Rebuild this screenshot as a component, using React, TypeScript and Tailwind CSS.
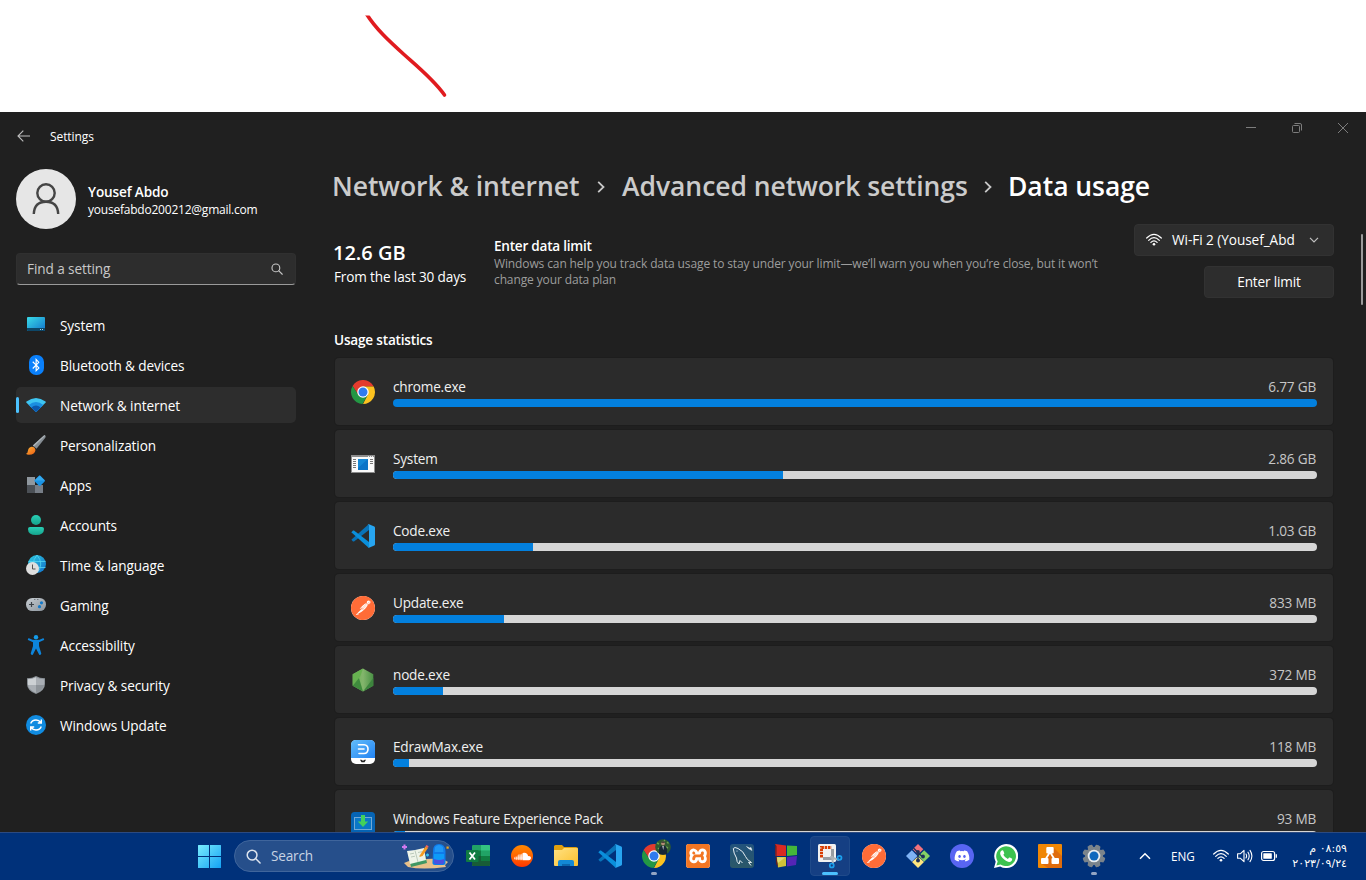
import type { ReactNode } from "react";
import { FaDiscord, FaSoundcloud, FaBluetoothB } from "react-icons/fa";
import { SiPostman, SiXampp } from "react-icons/si";

/* ---------- shared app icons (24x24) ---------- */

function ChromeIcon({ size = 24 }: { size?: number }) {
  return (
    <svg width={size} height={size} viewBox="0 0 48 48">
      <path d="M24 13 H45.3 L44.8 12 A24 24 0 0 0 3.2 12 L14.5 29.5 Z" fill="#e33b2e" />
      <path d="M45.3 13 H24 L33.5 29.5 L24 48 A24 24 0 0 0 45.3 13 Z" fill="#fcc21f" />
      <path d="M3.2 12 L14.5 29.5 L33.5 29.5 L23 48 A24 24 0 0 1 3.2 12 Z" fill="#239744" />
      <circle cx="24" cy="24" r="11.5" fill="#fff" />
      <circle cx="24" cy="24" r="9" fill="#2f7bee" />
    </svg>
  );
}

function CodeIcon() {
  return (
    <svg width="24" height="24" viewBox="0 0 24 24">
      <path d="M0.6 16 L2 17.4 Q2.5 17.7 3 17.4 L18 6 V0.6 Q17.4 0.5 16.8 1 L0.6 15.4 Q0.3 15.7 0.6 16Z" fill="#0873b8" />
      <path d="M0.6 8 L2 6.6 Q2.5 6.3 3 6.6 L18 18 V23.4 Q17.4 23.5 16.8 23 L0.6 8.6 Q0.3 8.3 0.6 8Z" fill="#0a8fdb" />
      <path d="M17 0.2 Q17.6 0 18 0.2 L23.3 2.6 Q24 3 24 3.7 V20.3 Q24 21 23.3 21.4 L18 23.8 Q17.2 24 16.6 23.4 Q18 23.6 18 22.5 V1.5 Q18 .4 16.6 .6Z" fill="#27a5f0" />
    </svg>
  );
}

function PostmanIcon() {
  return (
    <span className="flex size-6 items-center justify-center rounded-full bg-white">
      <SiPostman size={24} color="#ff6c37" />
    </span>
  );
}

function SystemProcessIcon() {
  return (
    <svg width="24" height="24" viewBox="0 0 24 24">
      <rect x="0" y="3" width="24" height="18" fill="#8c8c8c" />
      <rect x="1" y="5" width="22" height="15" fill="#fafafa" />
      <path d="M17 4.5h1M19 4.5h1M21 4.5h1" stroke="#e8e8e8" />
      <path d="M2 7.5h3M2 9.5h3M2 11.5h3M2 13.5h3M2 15.5h3M19 7.5h3M19 9.5h3M19 11.5h3" stroke="#777" />
      <rect x="7" y="7" width="10" height="11" fill="#0b74c8" />
      <path d="M7 7h10L7 16z" fill="#1487d6" />
    </svg>
  );
}

function NodeIcon() {
  return (
    <svg width="24" height="24" viewBox="0 0 24 24">
      <defs>
        <linearGradient id="nodeface" x1="0" y1="0" x2="1" y2="0">
          <stop offset="0" stopColor="#6fb257" />
          <stop offset=".5" stopColor="#83b56c" />
          <stop offset="1" stopColor="#4a9145" />
        </linearGradient>
      </defs>
      <path d="M12 .5 L22.3 6.300 V17.700 L12 23.500 L1.700 17.700 V6.300Z" fill="url(#nodeface)" />
      <path d="M1.700 6.300 L12 .5 L9 9 L1.700 17.700Z" fill="#67b150" />
      <path d="M1.700 17.700 L8 10 L12 23.500Z" fill="#3f8c3d" />
      <path d="M22.300 10 V17.700 L12 23.500Z" fill="#3d843d" />
    </svg>
  );
}

function EdrawIcon() {
  return (
    <svg width="24" height="24" viewBox="0 0 24 24">
      <defs>
        <linearGradient id="edraw" x1="0" y1="0" x2="1" y2="1">
          <stop offset="0" stopColor="#62bdfb" />
          <stop offset="1" stopColor="#2383f2" />
        </linearGradient>
      </defs>
      <rect width="24" height="24" rx="5" fill="#fff" />
      <path d="M0 18 V5 Q0 0 5 0 H19 Q24 0 24 5 V18Z" fill="url(#edraw)" />
      <path d="M7.5 4.700 H13 Q17 5 17 9 Q17 13.300 13 13.500 H8 M7.500 9 H13" fill="none" stroke="#fff" strokeWidth="1.600" strokeLinecap="round" />
      <path d="M9 19.800 h1.500 l.8 .7 h1.400 l.8-.7 H15 L13.500 22.200 h-3Z" fill="#222" />
    </svg>
  );
}

function FeaturePackIcon() {
  return (
    <svg width="24" height="24" viewBox="0 0 24 24">
      <rect width="24" height="24" rx="3.5" fill="#0664b4" />
      <rect x="3.5" y="5.5" width="17" height="12" fill="#0a77c7" stroke="#72a9d6" />
      <path d="M10 3h4v6.500h3.200L12 15 6.800 9.500H10Z" fill="#43d05c" />
    </svg>
  );
}

/* ---------- sidebar icons (20x20) ---------- */

const navItems: { label: string; icon: ReactNode }[] = [
  {
    label: "System",
    icon: (
      <svg width="20" height="20" viewBox="0 0 20 20">
        <defs>
          <linearGradient id="sys" x1="0" y1="0" x2="1" y2="1">
            <stop offset="0" stopColor="#39dbe8" />
            <stop offset="1" stopColor="#1274cb" />
          </linearGradient>
        </defs>
        <rect x="1" y="2" width="18" height="14" rx="1" fill="url(#sys)" />
        <path d="M1 13h18v2q0 1-1 1H2q-1 0-1-1z" fill="#0d4768" />
        <path d="M14 14.500h1M16 14.500h1" stroke="#a8d6ea" />
      </svg>
    ),
  },
  {
    label: "Bluetooth & devices",
    icon: (
      <span className="flex h-5 w-[15px] items-center justify-center rounded-[7px] bg-[#0a80fb]">
        <FaBluetoothB size={14} color="#fff" />
      </span>
    ),
  },
  {
    label: "Network & internet",
    icon: (
      <svg width="20" height="20" viewBox="0 0 20 20">
        <path d="M.3 7.500 Q0 7 .5 6.500 Q10 -.5 19.500 6.500 Q20 7 19.700 7.500 L10.700 16.500 Q10 17 9.300 16.500Z" fill="#3ec5f1" />
        <path d="M2.700 10 Q10 4 17.300 10 L10.700 16.500 Q10 17 9.300 16.500Z" fill="#1a8ee0" />
        <path d="M5.400 12.600 Q10 8.600 14.600 12.600 L10.700 16.500 Q10 17 9.300 16.500Z" fill="#0b58ae" />
      </svg>
    ),
  },
  {
    label: "Personalization",
    icon: (
      <svg width="20" height="20" viewBox="0 0 20 20">
        <defs>
          <linearGradient id="brush" x1="0" y1="0" x2="1" y2="1">
            <stop offset="0" stopColor="#fcb438" />
            <stop offset="1" stopColor="#ee5d12" />
          </linearGradient>
        </defs>
        <path d="M18.200 .3 Q20.400 .4 19.300 2.800 L10.500 13.800 L6.800 10.500 Z" fill="#858d93" />
        <path d="M18.200 .3 Q19 .2 19.200 .8 L8 11.500 L6.800 10.500Z" fill="#adb4b9" />
        <path d="M5.500 11.800 Q8.500 11.500 9.500 15 Q9 19.500 3 19.800 Q1 19.900 0 18.800 Q1.800 18.200 2 15.500 Q2.500 12.300 5.500 11.800Z" fill="url(#brush)" />
      </svg>
    ),
  },
  {
    label: "Apps",
    icon: (
      <svg width="20" height="20" viewBox="0 0 20 20">
        <rect x="1" y="2" width="8" height="8" fill="#8f979e" />
        <rect x="1" y="10" width="8" height="8" fill="#4b5056" />
        <rect x="9" y="10" width="8" height="8" fill="#777e87" />
        <rect x="9.700" y="1.800" width="8" height="8" rx="1" transform="rotate(45 13.700 5.800)" fill="#1a93e4" />
        <path d="M13.700 .6 L18.600 5.500 H8.600Z" fill="#34a9ee" />
      </svg>
    ),
  },
  {
    label: "Accounts",
    icon: (
      <svg width="20" height="20" viewBox="0 0 20 20">
        <defs>
          <linearGradient id="acct" x1="0" y1="0" x2="0" y2="1">
            <stop offset="0" stopColor="#29cfb5" />
            <stop offset="1" stopColor="#15a38c" />
          </linearGradient>
        </defs>
        <circle cx="10" cy="5" r="5" fill="url(#acct)" />
        <path d="M4 12 H16 Q18 12 18 14 Q18 20 10 20 Q2 20 2 14 Q2 12 4 12Z" fill="url(#acct)" />
      </svg>
    ),
  },
  {
    label: "Time & language",
    icon: (
      <svg width="20" height="20" viewBox="0 0 20 20">
        <defs>
          <linearGradient id="globe" x1="0" y1="0" x2="1" y2="1">
            <stop offset="0" stopColor="#2fcbe0" />
            <stop offset="1" stopColor="#1170cc" />
          </linearGradient>
        </defs>
        <circle cx="11" cy="9" r="9" fill="url(#globe)" />
        <path d="M2.500 6.500h17M5 12.500h14.500M11 0Q3.500 9 11 18M11 0Q18.500 9 11 18" stroke="#54d5f3" strokeWidth=".8" fill="none" />
        <circle cx="6.500" cy="13.500" r="6.500" fill="#dedede" />
        <path d="M6.500 9.500v4.500h3" stroke="#525252" fill="none" />
      </svg>
    ),
  },
  {
    label: "Gaming",
    icon: (
      <svg width="20" height="20" viewBox="0 0 20 20">
        <defs>
          <linearGradient id="pad" x1="0" y1="0" x2="1" y2="1">
            <stop offset="0" stopColor="#c7cdd2" />
            <stop offset="1" stopColor="#8b949c" />
          </linearGradient>
        </defs>
        <rect x="0" y="3" width="20" height="13" rx="6.300" fill="url(#pad)" />
        <path d="M3 9.500h5M5.500 7v5" stroke="#3c4248" strokeWidth="1.200" />
        <path d="M8.300 4.500h1M11.300 4.500h1" stroke="#555c63" />
        <circle cx="15.500" cy="7.800" r="1.600" fill="#1279ca" />
        <circle cx="13.500" cy="11.700" r="1.600" fill="#1279ca" />
      </svg>
    ),
  },
  {
    label: "Accessibility",
    icon: (
      <svg width="20" height="20" viewBox="0 0 20 20">
        <circle cx="10" cy="2.200" r="2.200" fill="#149ceb" />
        <path d="M3 3.200 Q10 7 17 3.200 Q18.600 3.300 18 4.900 L13 7.300 V11 L15.300 18.500 Q15 20.300 13.200 19.800 L10 13.500 L6.800 19.800 Q5 20.300 4.700 18.500 L7 11 V7.300 L2 4.900 Q1.400 3.300 3 3.200Z" fill="#0d85dc" />
      </svg>
    ),
  },
  {
    label: "Privacy & security",
    icon: (
      <svg width="20" height="20" viewBox="0 0 20 20">
        <path d="M10 1 Q13.500 3.300 19 3.300 V9 Q19 15.500 10 19 Q1 15.500 1 9 V3.300 Q6.500 3.300 10 1Z" fill="#8b9197" />
        <path d="M10 2.200 Q13.500 4.200 18 4.300 V9 Q18 14.800 10 17.900 Q2 14.800 2 9 V4.300 Q6.500 4.200 10 2.200Z" fill="#a9aeb4" />
        <path d="M10 2.200 V10 H2 V4.300 Q6.500 4.200 10 2.200Z" fill="#ccd0d4" />
        <path d="M10 10 H18 Q17.500 14.800 10 17.900Z" fill="#8d9399" />
      </svg>
    ),
  },
  {
    label: "Windows Update",
    icon: (
      <svg width="20" height="20" viewBox="0 0 20 20">
        <circle cx="10" cy="10" r="10" fill="#108be0" />
        <path d="M4.700 8.500 Q6 5 10 5 Q13 5 14.800 7.500 M15.300 4.500 V8 H11.800 M15.300 11.500 Q14 15 10 15 Q7 15 5.200 12.500 M4.700 15.500 V12 H8.200" stroke="#fff" strokeWidth="1.400" fill="none" />
      </svg>
    ),
  },
];

const usage: { name: string; amount: string; fill: number; icon: ReactNode }[] = [
  { name: "chrome.exe", amount: "6.77 GB", fill: 924, icon: <ChromeIcon /> },
  { name: "System", amount: "2.86 GB", fill: 390, icon: <SystemProcessIcon /> },
  { name: "Code.exe", amount: "1.03 GB", fill: 140, icon: <CodeIcon /> },
  { name: "Update.exe", amount: "833 MB", fill: 111, icon: <PostmanIcon /> },
  { name: "node.exe", amount: "372 MB", fill: 50, icon: <NodeIcon /> },
  { name: "EdrawMax.exe", amount: "118 MB", fill: 16, icon: <EdrawIcon /> },
  { name: "Windows Feature Experience Pack", amount: "93 MB", fill: 12, icon: <FeaturePackIcon /> },
];

function WifiIcon() {
  return (
    <svg width="16" height="16" viewBox="0 0 16 16" fill="none" stroke="currentColor" strokeWidth="1.2" strokeLinecap="round">
      <path d="M.7 6 Q8 -1.200 15.300 6M2.700 8.300 Q8 3 13.300 8.300M4.900 10.400 Q8 7.300 11.100 10.400" />
      <circle cx="8" cy="12.300" r="1.300" fill="currentColor" stroke="none" />
    </svg>
  );
}

function SearchIcon({ size, stroke }: { size: number; stroke: number }) {
  return (
    <svg width={size} height={size} viewBox="0 0 16 16" fill="none" stroke="currentColor" strokeWidth={stroke} strokeLinecap="round">
      <circle cx="6.500" cy="6.500" r="5.200" />
      <path d="M10.500 10.500 L15 15" />
    </svg>
  );
}

function Sidebar() {
  return (
    <aside className="flex w-[334px] shrink-0 flex-col pl-4">
      <div className="flex h-[49px] items-center pl-px">
        <svg className="mb-0.5" width="14" height="12" viewBox="0 0 14 12" fill="none" stroke="#bdbdbd" strokeWidth="1.1">
          <path d="M13 6H1M6.300 .7 L1 6 L6.300 11.300" />
        </svg>
        <span className="ml-[19px] text-[12px] tracking-[-0.08px]">Settings</span>
      </div>
      <div className="mt-2 flex h-[60px] items-center">
        <div className="flex size-[60px] items-center justify-center rounded-full bg-[#e6e6e6]">
          <svg width="28" height="32" viewBox="0 0 28 32" fill="none" stroke="#454545" strokeWidth="2.4">
            <circle cx="14" cy="10" r="8.700" />
            <path d="M1.800 31 Q2.300 18.800 14 18.800 Q25.700 18.800 26.200 31" />
          </svg>
        </div>
        <div className="ml-3 flex flex-col pt-[3px]">
          <span className="text-[13.6px] leading-[18px] font-semibold tracking-[-0.15px]">Yousef Abdo</span>
          <span className="text-[12px] leading-[18px] tracking-[-0.22px]">yousefabdo200212@gmail.com</span>
        </div>
      </div>
      <div className="mt-6 flex h-8 w-[280px] items-center justify-between rounded-[4px] border border-[#303030] border-b-[#9a9a9a] bg-[#2d2d2d] pr-3 pl-[10px] text-[#c8c8c8]">
        <span className="pt-px text-[13.6px] tracking-[-0.1px]">Find a setting</span>
        <SearchIcon size={12} stroke={1.5} />
      </div>
      <nav className="mt-[22px] flex w-[280px] flex-col gap-1">
        {navItems.map(({ label, icon }) => {
          const active = label === "Network & internet";
          return (
            <div key={label} className={active ? "flex h-9 items-center rounded-[5px] bg-[#2d2d2d]" : "flex h-9 items-center"}>
              <span className={active ? "h-4 w-[3px] rounded-full bg-[#4cc2ff]" : "w-[3px]"} />
              <span className="ml-[7px] flex size-5 items-center justify-center">{icon}</span>
              <span className="ml-[14px] pt-[3px] text-[13.6px] tracking-[-0.1px]">{label}</span>
            </div>
          );
        })}
      </nav>
    </aside>
  );
}

function WindowControls() {
  return (
    <div className="flex h-8 items-center justify-end gap-[36px] pr-[18px] text-[#7d7d7d]">
      <svg width="10" height="10" viewBox="0 0 10 10" stroke="currentColor">
        <path d="M0 4.500h10" />
      </svg>
      <svg width="10" height="10" viewBox="0 0 10 10" stroke="currentColor" fill="none">
        <rect x=".5" y="2.500" width="7" height="7" rx="1" />
        <path d="M2.500 .5 H8 Q9.500 .5 9.500 2 V7.500" />
      </svg>
      <svg width="10" height="10" viewBox="0 0 10 10" stroke="currentColor">
        <path d="M0 0 L10 10M10 0 L0 10" />
      </svg>
    </div>
  );
}

function CrumbArrow() {
  return (
    <svg width="8" height="12" viewBox="0 0 8 12" fill="none" stroke="#c8c8c8" strokeWidth="1.8">
      <path d="M1.200 .8 L6.500 6 L1.200 11.200" />
    </svg>
  );
}

function Overview() {
  return (
    <header className="flex min-w-0 flex-1 flex-col">
      <WindowControls />
      <div className="mt-[22px] -ml-[2px] flex h-[41px] items-center text-[26.5px] font-semibold tracking-[-0.05px] text-[#cbcbcb]">
        <span className="w-[265px]">Network &amp; internet</span>
        <CrumbArrow />
        <span className="ml-[17px] w-[362px]">Advanced network settings</span>
        <CrumbArrow />
        <span className="ml-4 text-white">Data usage</span>
      </div>
      <div className="flex h-[124px] pr-8">
        <div className="w-[160px] shrink-0 pt-[33px]">
          <div className="-ml-px text-[20px] leading-[26px] font-semibold">12.6 GB</div>
          <div className="text-[13.6px] leading-[22px] tracking-[-0.15px]">From the last 30 days</div>
        </div>
        <div className="w-[620px] pt-[30px]">
          <div className="text-[13.6px] leading-[18px] font-semibold tracking-[-0.25px]">Enter data limit</div>
          <p className="pt-px text-[12px] leading-4 tracking-[-0.12px] text-[#9d9d9d]">
            Windows can help you track data usage to stay under your limit—we’ll warn you when you’re close, but it won’t
            <br />
            change your data plan
          </p>
        </div>
        <div className="ml-auto flex flex-col items-end gap-[10px] pt-[17px]">
          <div className="flex h-8 w-[200px] items-center rounded-[4px] border border-[#323232] bg-[#2d2d2d] pl-[11px]">
            <WifiIcon />
            <span className="ml-[10px] w-[128px] pt-px text-[13.6px] tracking-[-0.05px] whitespace-nowrap">Wi-Fi 2 (Yousef_Abd</span>
            <svg className="ml-[9px]" width="10" height="6" viewBox="0 0 10 6" fill="none" stroke="#c0c0c0" strokeWidth="1.2">
              <path d="M1 .8 L5 4.800 L9 .8" />
            </svg>
          </div>
          <div className="flex h-8 w-[130px] items-center justify-center rounded-[4px] border border-[#323232] bg-[#2d2d2d] pt-px text-[13.6px] tracking-[-0.15px]">
            Enter limit
          </div>
        </div>
      </div>
      <h2 className="h-[27px] text-[13.6px] leading-[18px] font-semibold tracking-[-0.2px]">Usage statistics</h2>
    </header>
  );
}

function UsageList() {
  return (
    <section className="mr-[33px] ml-px flex flex-col gap-[5px]">
      {usage.map((item) => (
        <div key={item.name} className="flex h-[67px] shrink-0 items-center rounded-[4px] bg-[#2b2b2b] px-4 shadow-[0_0_0_1px_#1d1d1d]">
          {item.icon}
          <div className="ml-[18px] flex flex-1 flex-col pt-px">
            <div className="flex h-5 items-center justify-between text-[13.6px] tracking-[-0.2px]">
              <span className="text-[#f0f0f0]">{item.name}</span>
              <span className="pr-px text-[#c6c6c6]">{item.amount}</span>
            </div>
            <div className="mt-px h-2 w-[924px] overflow-hidden rounded-full bg-[#d6d6d6]">
              <div className="h-2 bg-[#0380de]" style={{ width: item.fill }} />
            </div>
          </div>
        </div>
      ))}
    </section>
  );
}

/* ---------- taskbar ---------- */

function StartIcon() {
  return (
    <svg width="24" height="24" viewBox="0 0 24 24">
      <defs>
        <linearGradient id="start" gradientUnits="userSpaceOnUse" x1="0" y1="0" x2="24" y2="24">
          <stop offset="0" stopColor="#7df0fd" />
          <stop offset="1" stopColor="#14a2f5" />
        </linearGradient>
      </defs>
      <path d="M1 1.500q0-.5.500-.5H12v11H1zM13 1h10.500q.5 0 .5.500V12H13zM1 13h11v11H1.500q-.5 0-.5-.5zM13 13h11v10.500q0 .5-.5.500H13z" fill="url(#start)" />
    </svg>
  );
}

function SearchArt() {
  return (
    <svg width="48" height="26" viewBox="0 0 48 26">
      <path d="M2 20 Q10 16 24 16 Q40 15 46 19 L43 22 L44 24 Q20 27 6 24 L4 22Z" fill="#e8c089" />
      <path d="M6 10 L22 7 L25 20 L9 24 Z" fill="#3f9763" />
      <path d="M5 8 L13 7 L22 5 L24 17 L16 19 L8 21 Z" fill="#eef4e8" />
      <path d="M13 7.500 L16 19 M8 11l4-.8M9 14l4-.8M16 9.500l4-.8M17 13l4-.8" stroke="#a5b8a8" strokeWidth=".7" />
      <path d="M18 12 L23.500 3.500 L26 5 L20.500 13 L17.500 14Z" fill="#f59b22" />
      <path d="M23.500 3.500 L24.500 2 L26.500 3.200 L26 5Z" fill="#f4655e" />
      <path d="M31 8 Q31 1 37 1 Q43 1 43.500 8 V19 Q44 22 41 22 H33 Q30 22 30.500 19Z" fill="#0f7bea" />
      <path d="M33 4 Q37 0 41 4 L41.500 9 H32.500Z" fill="#1f97f5" />
      <rect x="32" y="13" width="10" height="8" rx="2" fill="#4b4fe0" />
      <path d="M32 11h10v5q-5 2-10 0z" fill="#0d9bf8" />
      <path d="M2.500 1.500v5M0 4h5" stroke="#cf79ef" strokeWidth="2" />
      <path d="M25.500 10.500v3M24 12h3" stroke="#36c5f0" strokeWidth="1.400" />
      <path d="M44.500 3.500h2.200v2.200h-2.200z" fill="#f4ab1d" />
    </svg>
  );
}

function ExcelIcon() {
  return (
    <svg width="24" height="24" viewBox="0 0 24 24">
      <rect x="6" y="1" width="18" height="21" rx="1.200" fill="#21a366" />
      <path d="M15 1h8q1 0 1 1v4.500h-9z" fill="#33c481" />
      <path d="M6 6.500h9v5.500H6zM15 12h9v5h-9z" fill="#107c41" />
      <path d="M6 12h9v10H7q-1 0-1-1zM15 17h9v4q0 1-1 1h-8z" fill="#185c37" />
      <rect x="0" y="6" width="12.500" height="12" rx="1" fill="#107c41" />
      <path d="M3.500 8.500 L9 15.500M9 8.500 L3.500 15.500" stroke="#fff" strokeWidth="1.800" />
    </svg>
  );
}

function SoundCloudIcon() {
  return (
    <span className="flex size-[22px] items-center justify-center rounded-full bg-gradient-to-b from-[#ff8800] to-[#ff3300]">
      <FaSoundcloud size={17} color="#fff" />
    </span>
  );
}

function FolderIcon() {
  return (
    <svg width="24" height="24" viewBox="0 0 24 24">
      <defs>
        <linearGradient id="folder" x1="0" y1="0" x2="1" y2="1">
          <stop offset="0" stopColor="#ffe182" />
          <stop offset="1" stopColor="#fbc02d" />
        </linearGradient>
      </defs>
      <path d="M0 2.500q0-1.500 1.500-1.500H8l2 2H22q2 0 2 2V12H0z" fill="#e0a010" />
      <path d="M0 6H8l2-2H23q1 0 1 1V21q0 1-1 1H1q-1 0-1-1z" fill="url(#folder)" />
      <path d="M4 22v-4q0-2 2-2h12q2 0 2 2v4z" fill="#1389d6" />
      <path d="M8 22v-2h8v2z" fill="#0c66ad" />
    </svg>
  );
}

function ChromeTaskIcon() {
  return (
    <span className="relative size-6">
      <ChromeIcon />
      <svg className="absolute -top-[5px] left-[13px]" width="16" height="16" viewBox="0 0 16 16">
        <circle cx="8" cy="8" r="7.800" fill="#2f5a30" />
        <path d="M2 4l2 1M12 3l1.500 1.500M11 8l2 1M3 9l1 1M9 1l1 1" stroke="#6ba24f" strokeWidth="1.400" />
        <path d="M4 15V10Q5 6.500 8 6.500T12 10V15Q8 16.500 4 15Z" fill="#182735" />
        <circle cx="8" cy="4.500" r="1.900" fill="#b28b74" />
        <path d="M7.200 7h1.600L8.300 11z" fill="#c8cfd4" />
        <path d="M6 4Q8 1 10 4Q8 3 6 4Z" fill="#16191c" />
      </svg>
    </span>
  );
}

function XamppIcon() {
  return (
    <span className="flex size-6 items-center justify-center rounded-[3px] bg-white">
      <SiXampp size={24} color="#f37623" />
    </span>
  );
}

function MysqlIcon() {
  return (
    <svg width="24" height="24" viewBox="0 0 24 24">
      <defs>
        <linearGradient id="mysql" x1="0" y1="0" x2="0" y2="1">
          <stop offset="0" stopColor="#22537c" />
          <stop offset="1" stopColor="#2b5868" />
        </linearGradient>
      </defs>
      <rect width="24" height="24" rx="3" fill="url(#mysql)" />
      <path
        d="M9 20 Q6.500 18 6.500 14 Q3.500 9 3.300 4.500 Q4.500 2.500 8 4.500 Q13.500 7 15.500 12.500 Q16.500 15.500 21.500 18.500 L18.500 18.300 L21 21.500 M9 20 L10 16.500 L12.500 19"
        fill="none"
        stroke="#e6eef2"
        strokeWidth="1"
        strokeLinejoin="round"
      />
      <path d="M16.500 2.500 L18.500 4.500 L22 6.500 L21 3.500 L19.500 4Z" fill="#e6eef2" stroke="#e6eef2" strokeWidth=".5" />
      <circle cx="7" cy="7" r=".6" fill="#e6eef2" />
    </svg>
  );
}

function CubeIcon() {
  return (
    <svg width="24" height="24" viewBox="0 0 24 24">
      <path d="M1 0 L12 1.500 V12 L1.500 12Z" fill="#d92a22" />
      <path d="M13 1.500 L23 2 V11 L13 12Z" fill="#45b63a" />
      <path d="M2.500 13 L12 13 V22 L4 23.500Z" fill="#cfc238" />
      <path d="M13 13 L23 12 L22 21 L13 22.500Z" fill="#5425b5" />
      <path d="M1 0 L2.500 2 V12.500 L4 23.500 L2 20Z" fill="#5d1f24" />
      <path d="M3 13.500 L11 13.500 L4 19Z" fill="#ded779" />
    </svg>
  );
}

function SnipIcon() {
  return (
    <svg width="25" height="25" viewBox="0 0 25 25">
      <rect x="0" y="0" width="18" height="18" rx="1.500" fill="#f1f1f1" />
      <path d="M3.500 13.500V3.500H13.500" fill="none" stroke="#d83b01" strokeWidth="3" strokeDasharray="2.500 .8" />
      <path d="M14.500 5V14.500H5" fill="none" stroke="#999da2" strokeWidth="3" strokeLinejoin="round" />
      <path d="M12 13 L21 16M14 12 L15 20" stroke="#abb2b7" strokeWidth="2" />
      <circle cx="21.500" cy="13.800" r="2" fill="none" stroke="#1ca0ed" strokeWidth="1.700" />
      <circle cx="13.800" cy="21.500" r="2" fill="none" stroke="#1ca0ed" strokeWidth="1.700" />
    </svg>
  );
}

function GitIcon() {
  return (
    <svg width="24" height="24" viewBox="0 0 24 24">
      <path d="M12 0 L17.300 5.300 L12 10.500 L6.700 5.300Z" fill="#f2727c" />
      <path d="M5.800 6.200 L11.500 12 L5.800 17.800 L0 12Z" fill="#7fb3f5" />
      <path d="M18.200 6.200 L24 12 L18.200 17.800 L12.500 12Z" fill="#85d165" />
      <path d="M12 12.500 L18 18 L12 24 L6 18Z" fill="#ffe680" />
      <path d="M7.500 4 L12 8.500 V17M12 9 L17 13" fill="none" stroke="#1d3159" strokeWidth="1.400" />
      <circle cx="12" cy="8" r="1.900" fill="#1d3159" />
      <circle cx="12" cy="16.500" r="2" fill="#1d3159" />
      <circle cx="17" cy="12.500" r="1.900" fill="#1d3159" />
    </svg>
  );
}

function DiscordIcon() {
  return (
    <span className="flex size-6 items-center justify-center rounded-full bg-[#5865f2]">
      <FaDiscord size={16} color="#fff" />
    </span>
  );
}

function WhatsAppIcon() {
  return (
    <svg width="24" height="24" viewBox="0 0 24 24">
      <path d="M0 24 L1.700 17.800 A12 12 0 1 1 6.200 22.400Z" fill="#fff" />
      <path d="M2.400 21.600 L3.700 17.500 A9.900 9.900 0 1 1 6.500 20.400Z" fill="#3cc24f" />
      <path d="M8.200 6.200 Q9 6 9.300 6.700 L10.300 9.200 Q10.300 9.800 9.300 10.800 Q10.900 13.900 13.900 15 L15.100 13.600 Q15.600 13.200 18.200 14.700 Q18.300 17.600 15.100 17.900 Q12.300 18 8.300 13.800 Q5.600 10.500 6.300 8.300 Q6.800 6.700 8.200 6.200Z" fill="#fff" />
    </svg>
  );
}

function DrawIoIcon() {
  return (
    <svg width="24" height="24" viewBox="0 0 24 24">
      <rect width="24" height="24" rx="1" fill="#f08705" />
      <path d="M15 3 L24 12V24H10L4 20Z" fill="#df6c0c" />
      <path d="M12 8 L6.500 17M12 8 L17.500 17" stroke="#fff" strokeWidth="1.800" />
      <rect x="8.300" y="3" width="7.400" height="6.500" rx="1" fill="#fff" />
      <rect x="3" y="14" width="7.500" height="6" rx="1" fill="#fff" />
      <rect x="13.500" y="14" width="7.500" height="6" rx="1" fill="#fff" />
    </svg>
  );
}

const gearTeeth = [0, 45, 90, 135, 180, 225, 270, 315];

function GearIcon() {
  return (
    <svg width="24" height="24" viewBox="0 0 24 24">
      {gearTeeth.map((angle) => (
        <path key={angle} d="M8.800 5 L9.600 .9 Q12 -.2 14.400 .9 L15.200 5Z" transform={`rotate(${angle + 22.5} 12 12)`} fill="#7b848b" />
      ))}
      <circle cx="12" cy="12" r="9" fill="#7b848b" />
      <circle cx="12" cy="12" r="6.300" fill="#e9edf0" />
      <circle cx="12" cy="12" r="4.500" fill="#0f68bd" />
    </svg>
  );
}

const pinned: { id: string; icon: ReactNode; state?: "running" | "focused" }[] = [
  { id: "excel", icon: <ExcelIcon /> },
  { id: "soundcloud", icon: <SoundCloudIcon /> },
  { id: "explorer", icon: <FolderIcon /> },
  { id: "code", icon: <CodeIcon /> },
  { id: "chrome", icon: <ChromeTaskIcon />, state: "running" },
  { id: "xampp", icon: <XamppIcon /> },
  { id: "mysql", icon: <MysqlIcon /> },
  { id: "cube", icon: <CubeIcon /> },
  { id: "snip", icon: <SnipIcon />, state: "focused" },
  { id: "postman", icon: <PostmanIcon /> },
  { id: "git", icon: <GitIcon /> },
  { id: "discord", icon: <DiscordIcon /> },
  { id: "whatsapp", icon: <WhatsAppIcon /> },
  { id: "drawio", icon: <DrawIoIcon /> },
  { id: "settings", icon: <GearIcon />, state: "running" },
];

function Taskbar() {
  return (
    <footer className="flex h-12 items-center border-t border-[#2c4a80] bg-[#00317a] pb-px pl-[197px] text-white">
      <StartIcon />
      <div className="ml-[13px] flex h-8 w-[220px] items-center rounded-full border border-[#3f659c] bg-[#264f8b] pr-[3px] pl-[11px] text-[#dde4ee]">
        <SearchIcon size={15} stroke={1.6} />
        <span className="ml-[10px] flex-1 text-[13.6px] tracking-[-0.2px] text-[#c8d3e3]">Search</span>
        <SearchArt />
      </div>
      <div className="ml-1 flex gap-1">
        {pinned.map(({ id, icon, state }) => (
          <div
            key={id}
            className={
              state === "focused"
                ? "relative flex size-10 items-center justify-center rounded-[4px] border border-[#1f4a8a] bg-[#153f83]"
                : "relative flex size-10 items-center justify-center"
            }
          >
            {icon}
            {state === "running" && <span className="absolute bottom-px left-[17px] h-[3px] w-1.5 rounded-full bg-[#93a5c4]" />}
            {state === "focused" && <span className="absolute bottom-0 left-[11px] h-[3px] w-4 rounded-full bg-[#4cc2ff]" />}
          </div>
        ))}
      </div>
      <svg className="ml-[25px]" width="12" height="8" viewBox="0 0 12 8" fill="none" stroke="#fff" strokeWidth="1.5">
        <path d="M1 6.700 L6 1.700 L11 6.700" />
      </svg>
      <span className="ml-[20px] w-[42px] pt-px text-[11.7px]">ENG</span>
      <WifiIcon />
      <svg className="ml-2" width="16" height="16" viewBox="0 0 16 16" fill="none" stroke="#fff" strokeWidth="1.1" strokeLinejoin="round" strokeLinecap="round">
        <path d="M.6 5.700 H3.500 L7 2.300 V13.700 L3.500 10.300 H.6ZM9 6 Q10.200 8 9 10M11 4.200 Q13.400 8 11 11.800M13 2.400 Q16.800 8 13 13.600" />
      </svg>
      <svg className="ml-2" width="16" height="16" viewBox="0 0 16 16" fill="none" stroke="#fff">
        <rect x=".6" y="3.500" width="13" height="9" rx="2" strokeWidth="1.200" />
        <rect x="2.300" y="5.200" width="8.500" height="5.600" rx=".6" fill="#fff" stroke="none" />
        <path d="M15.300 6.300v3.400" strokeWidth="1.300" />
      </svg>
      <div dir="rtl" className="mr-[19px] ml-auto flex w-[70px] flex-col font-['DejaVu_Sans',sans-serif] text-[11px] leading-[15px] whitespace-nowrap">
        <span>٠٨:٥٩ م</span>
        <span>٢٠٢٣/٠٩/٢٤</span>
      </div>
    </footer>
  );
}

export default function App() {
  return (
    <div className="flex h-[880px] w-[1366px] flex-col overflow-hidden bg-white font-['Open_Sans','Noto_Sans',sans-serif] text-white">
      <div className="h-28 shrink-0">
        <svg width="1366" height="112" viewBox="0 0 1366 112" fill="none">
          <path d="M366.500 14 C376 29 389 41 404 54.500 C418 67 434 80 444.500 95" stroke="#e01b1f" strokeWidth="3.6" strokeLinecap="round" />
          <rect x="360" y="10" width="14" height="5.500" fill="#fff" />
        </svg>
      </div>
      <div className="flex h-[720px] shrink-0 overflow-hidden bg-[#202020]">
        <Sidebar />
        <div className="flex min-w-0 flex-1 flex-col">
          <div className="relative flex">
            <Overview />
            <span className="absolute top-[122px] right-[3px] h-[71px] w-0.5 rounded-full bg-[#9b9b9b]" />
          </div>
          <UsageList />
        </div>
      </div>
      <Taskbar />
    </div>
  );
}
